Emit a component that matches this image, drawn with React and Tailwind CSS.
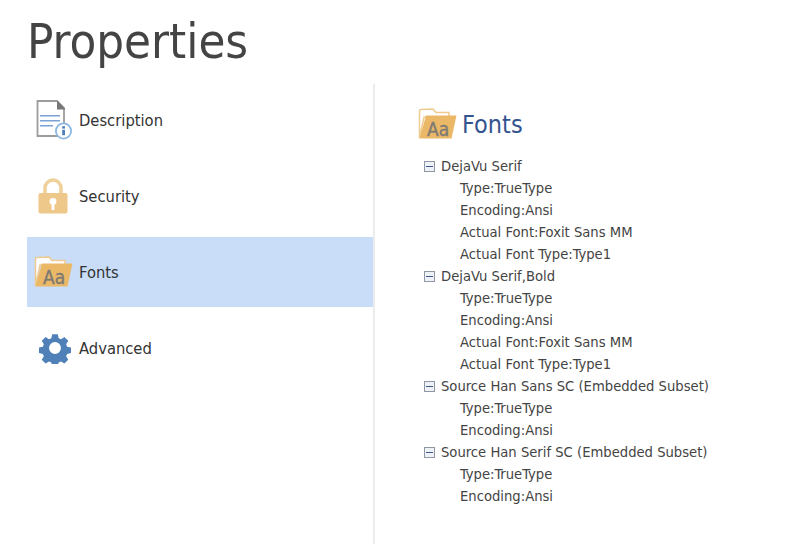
const sans = "font-['DejaVu_Sans_Condensed','DejaVu_Sans',sans-serif]";

function DocIcon() {
  return (
    <svg width="38" height="40" viewBox="0 0 38 40" fill="none">
      <path d="M3.5 1H23L30 8V36H3.5Z" fill="#fff" stroke="#9c9c9c" strokeWidth="1.8" />
      <path d="M23 0.5L31 8.5V9.5H23Z" fill="#777777" />
      <path d="M6 15.7H26M6 20.7H26M6 25.7H19" stroke="#7aa3d3" strokeWidth="1.6" />
      <circle cx="29.5" cy="31" r="7.6" fill="#fff" stroke="#8db7e2" strokeWidth="1.8" />
      <rect x="28.2" y="29.8" width="2.8" height="5.4" fill="#4f81b8" />
      <rect x="28.2" y="26.2" width="2.8" height="2.4" fill="#4f81b8" />
    </svg>
  );
}

function LockIcon() {
  return (
    <svg width="30" height="36" viewBox="0 0 30 36" fill="none">
      <path d="M7 17V10.5C7 5.5 10.5 2 15 2S23 5.5 23 10.5V17" stroke="#f0d09b" strokeWidth="3.6" />
      <rect x="0.5" y="15" width="29" height="20.5" rx="2" fill="#eec88a" />
      <circle cx="15" cy="23.5" r="3.4" fill="#fff" />
      <rect x="13.6" y="24" width="2.8" height="8" fill="#fff" />
    </svg>
  );
}

function FolderIcon() {
  return (
    <svg width="39" height="32" viewBox="0 0 39 32" fill="none">
      <path d="M1.5 30V3C1.5 2 2 1.500 3 1.500L15 1L18 4.500H31V9H6Z" fill="#fff" stroke="#eecb8e" strokeWidth="1.5" />
      <path d="M8 7.500H38.500L33.500 30.500H1.500Z" fill="#ebb868" />
      <text x="9" y="28" fontFamily="'DejaVu Sans Condensed','DejaVu Sans',sans-serif" fontSize="19" fill="#7d7a74" stroke="#7d7a74" strokeWidth="0.35">Aa</text>
    </svg>
  );
}

function GearIcon() {
  return (
    <svg width="32" height="32" viewBox="-1.5 -1.5 35 35">
      <path
        fill="#4f81b8"
        fillRule="evenodd"
        d="M13 1h6l1 4.2 2.600 1.100 3.700-2.300 4.200 4.200-2.300 3.700 1.100 2.600 4.200 1v6l-4.200 1-1.100 2.600 2.300 3.700-4.200 4.200-3.700-2.300-2.600 1.100-1 4.200h-6l-1-4.200-2.600-1.100-3.700 2.300-4.200-4.200 2.300-3.700-1.100-2.600-4.200-1v-6l4.200-1 1.100-2.600-2.300-3.700 4.200-4.200 3.700 2.300L12 5.200ZM16 9.500a6.500 6.500 0 1 0 0 13 6.500 6.500 0 0 0 0-13Z"
      />
    </svg>
  );
}

const navItems = [
  { label: "Description", icon: <DocIcon /> },
  { label: "Security", icon: <LockIcon /> },
  { label: "Fonts", icon: <FolderIcon />, active: true },
  { label: "Advanced", icon: <span className="ml-[3px] flex"><GearIcon /></span> },
];

const fonts = [
  { name: "DejaVu Serif", props: ["Type:TrueType", "Encoding:Ansi", "Actual Font:Foxit Sans MM", "Actual Font Type:Type1"] },
  { name: "DejaVu Serif,Bold", props: ["Type:TrueType", "Encoding:Ansi", "Actual Font:Foxit Sans MM", "Actual Font Type:Type1"] },
  { name: "Source Han Sans SC (Embedded Subset)", props: ["Type:TrueType", "Encoding:Ansi"] },
  { name: "Source Han Serif SC (Embedded Subset)", props: ["Type:TrueType", "Encoding:Ansi"] },
];

function Minus() {
  return (
    <span className="flex h-[11px] w-[11px] items-center justify-center border border-[#8f97a3] bg-[#eef2f7]">
      <span className="h-px w-[7px] bg-[#3d5a85]" />
    </span>
  );
}

export default function App() {
  return (
    <div className={`h-[544px] w-[797px] overflow-hidden bg-white pl-[27px] ${sans}`}>
      <h1 className="h-[84px] pt-[6px] text-[48.7px] leading-[70px] font-normal text-[#444444]">Properties</h1>
      <div className="flex h-[460px]">
        <nav className="flex w-[348px] flex-col gap-[6px] border-r-2 border-[#ececec] pt-px">
          {navItems.map((it) => (
            <div
              key={it.label}
              className={`flex h-[70px] items-center ${it.active ? "bg-[#c9dcf8]" : ""}`}
            >
              <span className="flex w-[52px] shrink-0 items-center justify-center">{it.icon}</span>
              <span className="pt-[2px] text-[16.4px] text-[#333333]">{it.label}</span>
            </div>
          ))}
        </nav>
        <section className="pl-[43px] pt-[23px]">
          <div className="flex h-[34px] items-center gap-[5px]">
            <FolderIcon />
            <span className="pt-px text-[25px] text-[#34548f]">Fonts</span>
          </div>
          <div className="mt-[14px] pl-[6px] text-[14.65px] leading-[22px] text-[#444444]">
            {fonts.map((f) => (
              <div key={f.name}>
                <div className="flex items-center gap-[6px]">
                  <Minus />
                  <span>{f.name}</span>
                </div>
                {f.props.map((p, i) => (
                  <div key={i} className="pl-[36px]">{p}</div>
                ))}
              </div>
            ))}
          </div>
        </section>
      </div>
    </div>
  );
}
